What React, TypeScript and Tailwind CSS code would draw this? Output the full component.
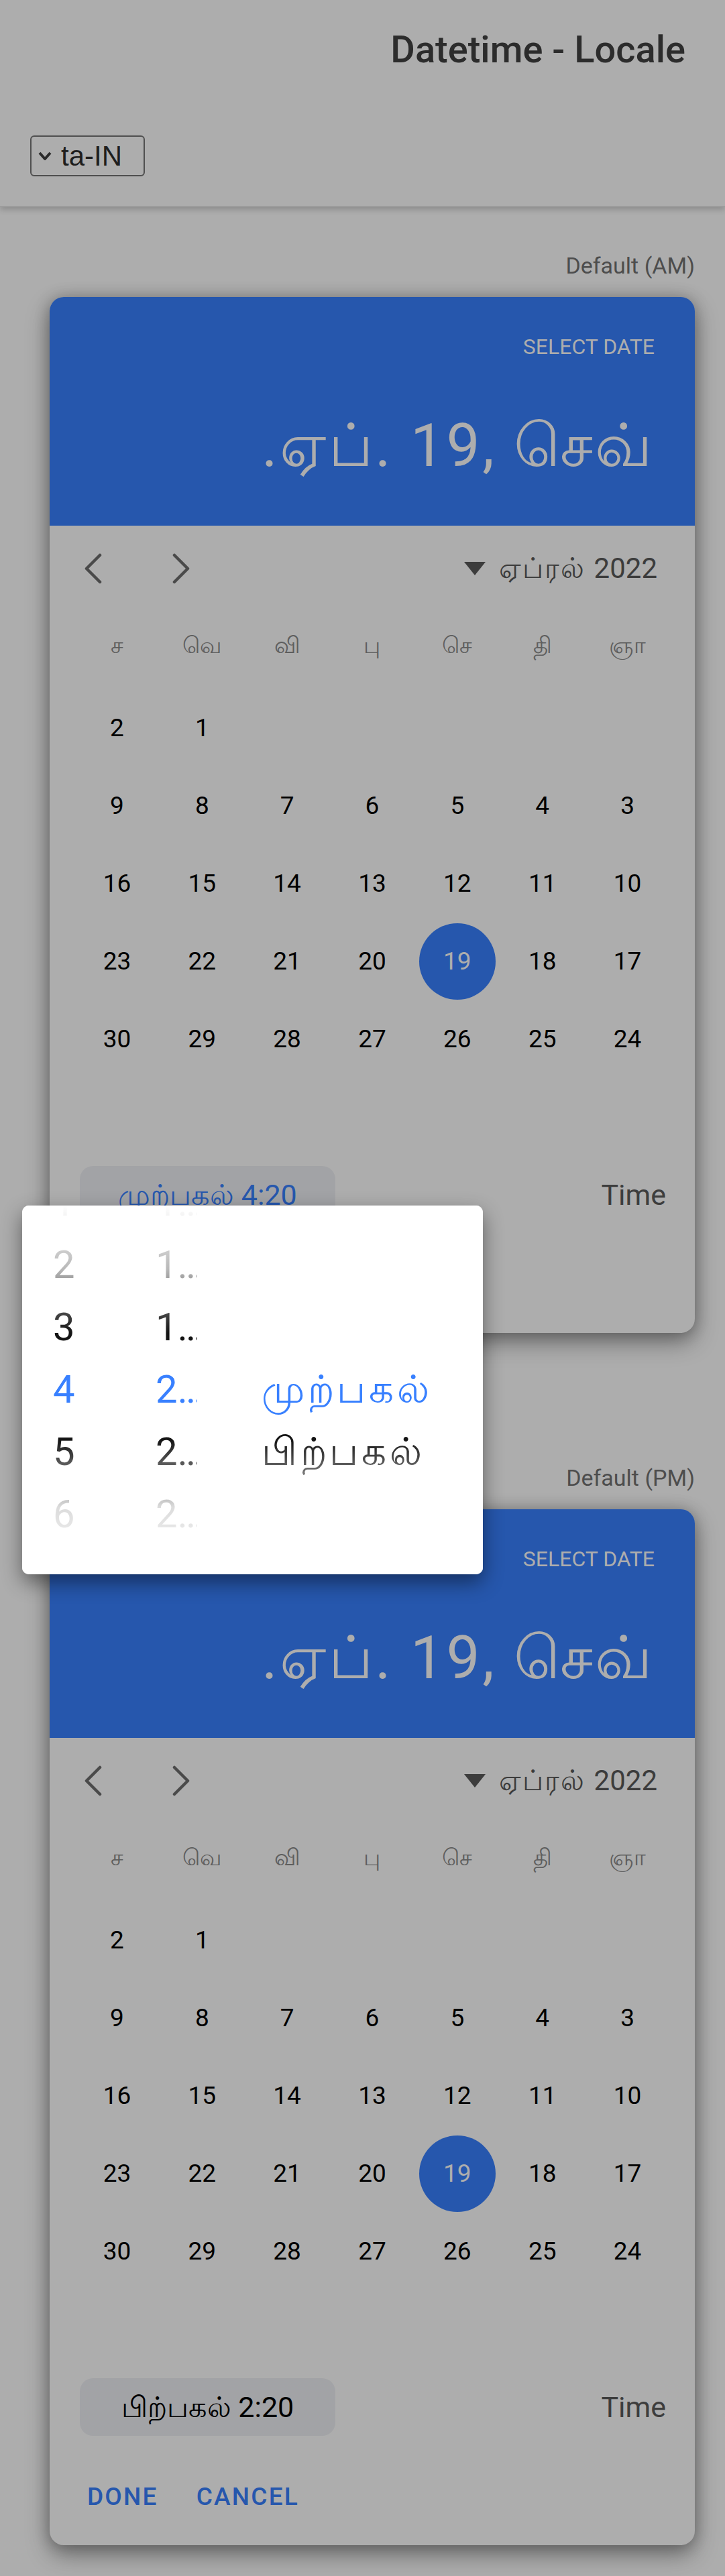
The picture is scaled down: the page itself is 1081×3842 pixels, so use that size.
import React from 'react';

const dayNames = ['ச', 'வெ', 'வி', 'பு', 'செ', 'தி', 'ஞா'];

// visual order, left to right (the calendar is laid out right-to-left)
const weeks: (number | null)[][] = [
  [2, 1, null, null, null, null, null],
  [9, 8, 7, 6, 5, 4, 3],
  [16, 15, 14, 13, 12, 11, 10],
  [23, 22, 21, 20, 19, 18, 17],
  [30, 29, 28, 27, 26, 25, 24],
  [null, null, null, null, null, null, null],
];

const roboto = { fontFamily: 'Roboto, "Noto Sans", sans-serif' };

function Chevron({ dir }: { dir: 'left' | 'right' }) {
  return (
    <svg width="26" height="46" viewBox="0 0 26 46" fill="none">
      <polyline
        points={dir === 'left' ? '23,3 3,23 23,43' : '3,3 23,23 3,43'}
        stroke="#4a4a4a"
        strokeWidth="4.5"
        strokeLinecap="round"
        strokeLinejoin="round"
      />
    </svg>
  );
}

function DateCard({ time, active }: { time: string; active: boolean }) {
  return (
    <div className="ml-[74px] mr-[45px] h-[1545px] rounded-[21px] bg-[#adadad] overflow-hidden shadow-[0_14px_34px_rgba(0,0,0,0.38),0_0_22px_rgba(0,0,0,0.22)] flex flex-col">
      {/* selected date header */}
      <div className="h-[341px] bg-[#2657ad] flex flex-col items-end pt-[55px] pr-[60px]">
        <div className="text-[32px] leading-[38px] text-[#adadad] uppercase">SELECT DATE</div>
        <div dir="rtl" className="mt-[75px] text-[89px] leading-[107px] text-[#adadad] tracking-[0.04em]">
          ஏப். 19, செவ்.
        </div>
      </div>

      {/* month navigation */}
      <div className="h-[128px] flex items-center justify-between pl-[52px] pr-[56px]">
        <div className="flex items-center gap-[105px]">
          <Chevron dir="left" />
          <Chevron dir="right" />
        </div>
        <div className="flex items-center gap-[20px] text-[42px] leading-[50px] text-[#3c3c3c]">
          <svg width="32" height="20" viewBox="0 0 32 20">
            <polygon points="0,0 32,0 16,20" fill="#3c3c3c" />
          </svg>
          <span className="tracking-[0.05em]">ஏப்ரல்</span>
          <span className="-ml-[8px]">2022</span>
        </div>
      </div>

      {/* calendar grid */}
      <div className="px-[37px]">
        <div className="h-[100px] grid grid-cols-7 items-center text-[34px] text-[#5e5e5e]">
          {dayNames.map((d) => (
            <div key={d} className="text-center">{d}</div>
          ))}
        </div>
        <div className="pt-[16px]">
          {weeks.map((w, i) => (
            <div key={i} className="h-[116px] grid grid-cols-7 items-center">
              {w.map((n, j) => (
                <div key={j} className="flex items-center justify-center">
                  {n === 19 ? (
                    <div className="w-[114px] h-[114px] rounded-full bg-[#2657ad] flex items-center justify-center text-[37px] text-[#adadad]">
                      19
                    </div>
                  ) : (
                    <span className="text-[37px] text-black">{n ?? ''}</span>
                  )}
                </div>
              ))}
            </div>
          ))}
        </div>
      </div>

      {/* time row */}
      <div className="mt-[15px] h-[86px] flex items-center justify-between pl-[45px] pr-[43px]">
        <div
          className={`h-[86px] w-[381px] rounded-[20px] bg-[#a2a3a6] flex items-center justify-center text-[43px] ${
            active ? 'text-[#2657ad]' : 'text-black'
          }`}
        >
          {time}
        </div>
        <span className="text-[43px] text-[#3d3d3d]">Time</span>
      </div>

      {/* buttons */}
      <div className="mt-[46px] h-[90px] flex items-center gap-[57px] pl-[56px] text-[37px] font-medium tracking-[0.06em] text-[#2657ad]">
        <span>DONE</span>
        <span>CANCEL</span>
      </div>
    </div>
  );
}

const pickerRows = [
  { h: '1', m: '17', p: '' },
  { h: '2', m: '18', p: '' },
  { h: '3', m: '19', p: '' },
  { h: '4', m: '20', p: 'முற்பகல்', sel: true },
  { h: '5', m: '21', p: 'பிற்பகல்' },
  { h: '6', m: '22', p: '' },
];

function TimePopover() {
  return (
    <div className="absolute left-[33px] top-[1798px] w-[687px] h-[550px] rounded-[10px] bg-white overflow-hidden shadow-[0_12px_30px_rgba(0,0,0,0.45)]">
      <div className="-mt-[51px] flex flex-col">
        {pickerRows.map((r) => (
          <div
            key={r.h}
            className={`h-[93px] flex items-center text-[58px] ${r.sel ? 'text-[#3880ff]' : 'text-[#141414]'}`}
          >
            <span className="ml-[46px] w-[153px]">{r.h}</span>
            <span className="w-[62px] truncate">{r.m}</span>
            <span className="ml-[96px] w-[272px] truncate tracking-[0.08em]">{r.p}</span>
          </div>
        ))}
      </div>
      <div className="absolute inset-x-0 top-0 h-[190px] bg-gradient-to-b from-white via-white/70 to-white/0" />
      <div className="absolute inset-x-0 bottom-0 h-[200px] bg-gradient-to-t from-white via-white/85 to-white/0" />
    </div>
  );
}

export default function App() {
  return (
    <div className="relative w-[1081px] min-h-[3842px] bg-[#adadad]" style={roboto}>
      {/* header */}
      <header className="h-[309px] border-b-[2px] border-[#9c9c9c] shadow-[0_4px_8px_rgba(0,0,0,0.18)] flex flex-col">
        <div className="h-[147px] flex items-center justify-end pr-[59px]">
          <h1 className="text-[56px] font-medium text-[#2c2c2c]">Datetime - Locale</h1>
        </div>
        <div className="mt-[55px] pl-[45px]">
          <div
            className="w-[171px] h-[61px] rounded-[6px] border-[2px] border-[#4f4f4f] flex items-center gap-[12px] pl-[8px] text-[42px] text-[#1e1e1e]"
            style={{ fontFamily: '"Liberation Sans", Arial, sans-serif' }}
          >
            <svg width="24" height="18" viewBox="0 0 24 18">
              <polyline points="4,4 12,13 20,4" fill="none" stroke="#2a2a2a" strokeWidth="4" strokeLinejoin="round" />
            </svg>
            <span>ta-IN</span>
          </div>
        </div>
      </header>

      <main className="pb-[44px]">
        <div className="pt-[67px] pr-[45px] text-right text-[34px] leading-[40px] text-[#4d4d4d]">Default (AM)</div>
        <div className="mt-[27px]">
          <DateCard time="முற்பகல் 4:20" active />
        </div>

        <div className="mt-[196px] pr-[45px] text-right text-[34px] leading-[40px] text-[#4d4d4d]">Default (PM)</div>
        <div className="mt-[27px]">
          <DateCard time="பிற்பகல் 2:20" active={false} />
        </div>
      </main>

      <TimePopover />
    </div>
  );
}
